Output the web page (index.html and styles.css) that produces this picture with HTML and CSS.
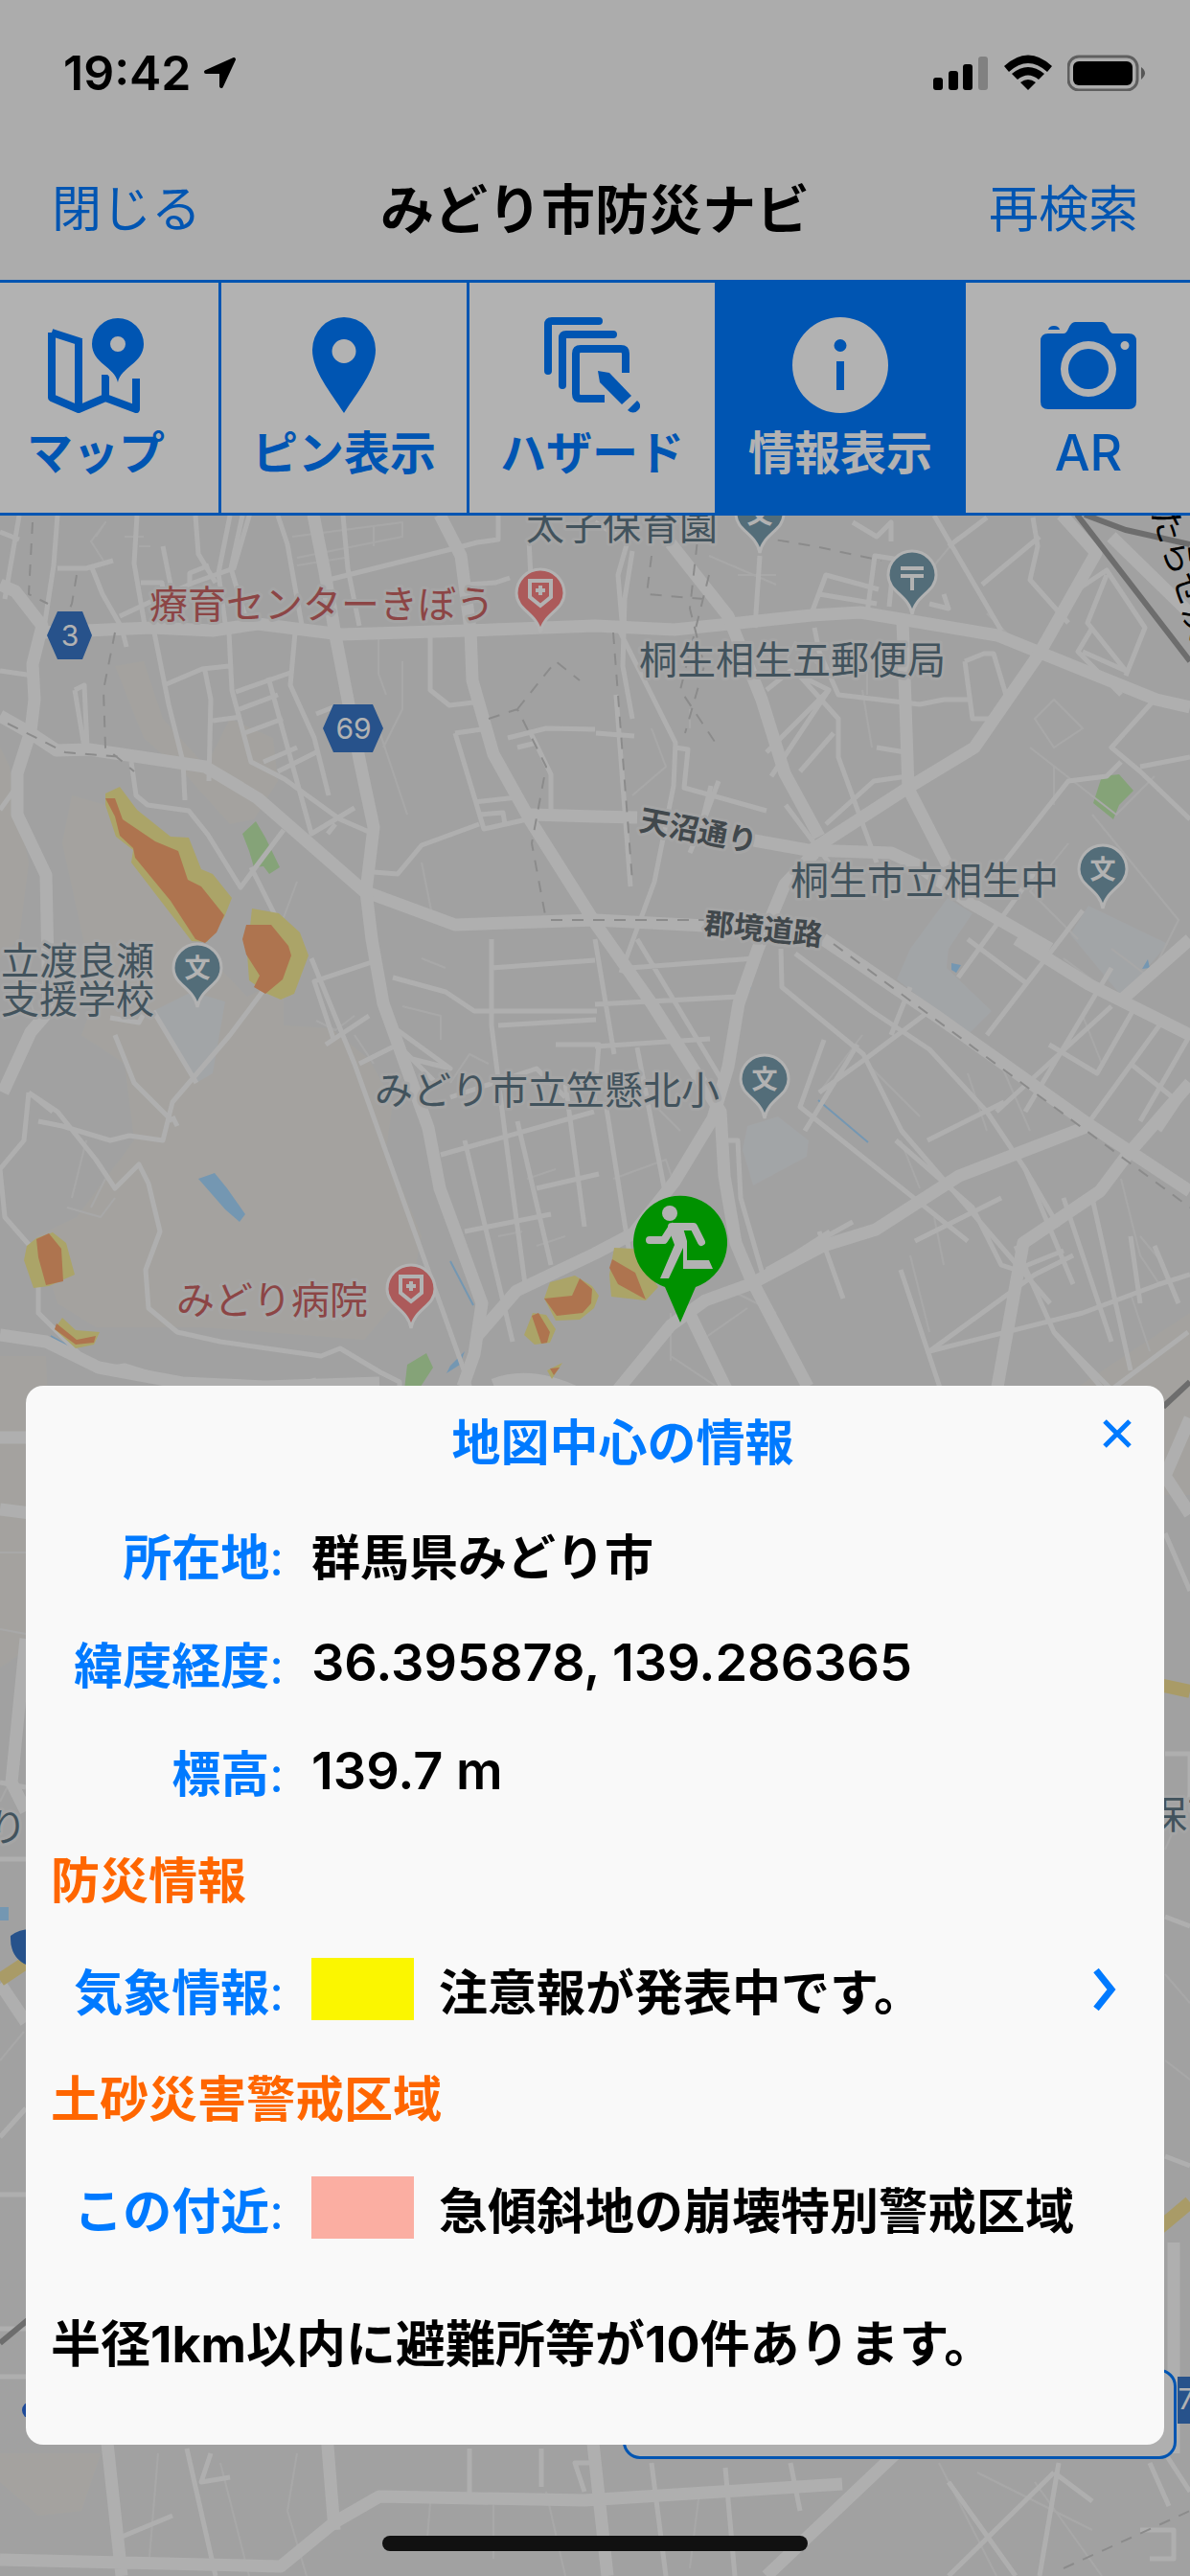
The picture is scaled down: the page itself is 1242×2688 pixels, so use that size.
FILE: index.html
```html
<!DOCTYPE html>
<html lang="ja">
<head>
    <meta charset="UTF-8">
    <meta name="viewport" content="width=device-width, initial-scale=1.0">
    <title>みどり市防災ナビ</title>
    <link rel="stylesheet" href="styles.css">
</head>
<body>
    <div class="app">
        <div class="status-bar">
            <div class="status-left">
                <span class="time">19:42</span>
                <svg class="location" viewBox="0 0 34 32" width="34" height="32"><path d="M32 2 19 30V15H3z" stroke="#000" stroke-width="4" stroke-linejoin="round"/></svg>
            </div>
            <div class="status-right">
                <svg viewBox="0 0 58 38" width="58" height="38">
                    <rect x="0" y="24" width="10" height="13" rx="3"/>
                    <rect x="16" y="17" width="10" height="20" rx="3"/>
                    <rect x="31" y="10" width="10" height="27" rx="3"/>
                    <rect x="47" y="2" width="10" height="35" rx="3" opacity="0.25"/>
                </svg>
                <svg viewBox="0 0 50 38" width="50" height="38">
                    <path d="M25 37 17 29q8-6 16 0zM8 20q17-14 34 0l-6 6q-11-9-22 0zM0 12q25-23 50 0l-5 6Q25 0 5 18z"/>
                </svg>
                <svg viewBox="0 0 82 38" width="82" height="38">
                    <rect x="1" y="2" width="72" height="35" rx="11" fill="none" stroke="#000" stroke-width="3" opacity="0.45"/>
                    <rect x="6" y="7" width="62" height="25" rx="6"/>
                    <path d="M77 13q8 6 0 13z" opacity="0.5"/>
                </svg>
            </div>
        </div>

        <header class="nav-bar">
            <button class="nav-button">閉じる</button>
            <h1>みどり市防災ナビ</h1>
            <button class="nav-button">再検索</button>
        </header>

        <nav class="tabs">
            <button class="tab">
                <svg viewBox="0 0 100 100" width="100" height="100">
                    <path d="M4 16v68l28 12 28-12 32 12V64M4 16l31 10M32 24v70M60 60v24" fill="none" stroke="currentColor" stroke-width="8" stroke-linejoin="round"/>
                    <path d="M73 72C66 52 44 48 44 29a29 29 0 0 1 58 0c0 19-22 23-29 43z" stroke="#fff" stroke-width="5" class="map-pin"/>
                    <path fill="currentColor" fill-rule="evenodd" d="M73 68c-3-16-27-20-27-40a27 27 0 0 1 54 0c0 20-24 24-27 40zM73 20a8 8 0 1 0 0 16 8 8 0 1 0 0-16z"/>
                </svg>
                <span>マップ</span>
            </button>
            <button class="tab">
                <svg viewBox="0 0 100 100" width="100" height="100"><path fill="currentColor" fill-rule="evenodd" d="M50 100C36 78 17 56 17 34a33 34 0 0 1 66 0c0 22-19 44-33 66zM50 23a12 12 0 1 0 0 25 12 12 0 1 0 0-25z"/></svg>
                <span>ピン表示</span>
            </button>
            <button class="tab">
                <svg viewBox="0 0 100 100" width="100" height="100" fill="none" stroke="currentColor" stroke-width="8" stroke-linecap="round">
                    <path d="M4 56V8q0-4 4-4h49M19 71V22q0-4 4-4h49"/>
                    <path d="M85 58V38q0-5-5-5H38q-5 0-5 5v42q0 5 5 5h25" stroke-linecap="butt"/>
                    <path d="M56 56l12 2 23 24-10 9-23-23z" fill="currentColor" stroke="none"/>
                    <path d="M87 97 97 87q6 5 1 10t-11 0z" fill="currentColor" stroke="none"/>
                </svg>
                <span>ハザード</span>
            </button>
            <button class="tab active">
                <svg viewBox="0 0 100 100" width="100" height="100"><path fill="currentColor" fill-rule="evenodd" d="M50 0a50 50 0 1 0 0 100A50 50 0 1 0 50 0zM50 23a6 6 0 1 1 0 13 6 6 0 1 1 0-13zM46 46h8v30h-8z"/></svg>
                <span>情報表示</span>
            </button>
            <button class="tab">
                <svg viewBox="0 0 100 100" width="100" height="100"><path fill="currentColor" fill-rule="evenodd" d="M8 17h16q3 0 5-5 3-7 7-7h28q4 0 7 7 2 5 5 5h16q8 0 8 8v63q0 8-8 8H8q-8 0-8-8V25q0-8 8-8zM50 25a29 29 0 1 0 0 58 29 29 0 1 0 0-58zM50 33a21 21 0 1 1 0 42 21 21 0 1 1 0-42zM88 25a4 4 0 1 0 0 9 4 4 0 1 0 0-9zM8 13q1-4 6-4t6 4z"/></svg>
                <span class="latin">AR</span>
            </button>
        </nav>

        <main class="map">
            <svg class="map-canvas" viewBox="0 538 1242 2150" preserveAspectRatio="xMidYMin slice">
                <defs>
                    <g id="pin"><path d="M0 41C-3 21-25 18-25 0a25 25 0 0 1 50 0C25 18 3 21 0 41z" stroke-width="3"/></g>
                    <path id="cross" d="M-11-13h22v17L0 13-11 4zM-5-3H5M0-8V2" fill="none" stroke="#fff" stroke-width="4"/>
                </defs>

                <!-- hills, grounds, water, parks -->
                <g class="hill">
                    <path d="M75 830 110 840 200 980 258 1040 296 1020 296 1070 345 1073 385 1105 410 1150 403 1200 440 1290 430 1340 380 1398 210 1385 100 1385 60 1360 38 1290 80 1270 140 1190 130 1110 85 1080 100 1040 65 880z"/>
                    <path d="M120 695 150 690 170 750 215 800 240 750 285 770 290 815 265 855 240 860 195 810 150 770z"/>
                    <path d="M0 780 10 800 30 900 20 980 0 1000zM0 1415 48 1415 60 1700 0 1740zM1125 1447 1242 1370V1560H1125zM0 2560H105L85 2620 40 2625 0 2590z"/>
                </g>
                <g class="ground">
                    <path d="M160 1055 200 1035 235 1045 222 1120 205 1130zM989 937 1015 953 990 990 988 1010 1035 1055 1010 1080 936 1022 950 990zM1136 945 1219 985 1171 1040 1117 975z"/>
                    <path d="M780 1175 812 1165 844 1190 842 1207 786 1237 775 1200z"/>
                </g>
                <g class="water">
                    <path d="M207 1230 224 1224 237 1240 256 1267 250 1275 235 1262zM993 1005 1003 1007 998 1015 993 1012zM1198 1001 1200 1010 1192 1011zM782 1025 784 1030 779 1041zM0 1990H9V2004H0zM470 1425 485 1410 480 1424 466 1433z"/>
                    <path class="stream" d="M470 1316 494 1362M854 1148 906 1192M53 1394 74 1406"/>
                </g>
                <g class="park">
                    <path d="M253 870 267 857 277 874 292 905 281 912 275 904 265 905 260 888zM1150 810 1168 808 1183 825 1168 840 1162 855 1141 838zM425 1424 445 1412 452 1427 437 1450H422zM535 1445 556 1442V1450H530z"/>
                </g>

                <!-- small streets -->
                <g class="lane">
                    <path d="M100 560 110 545 95 565 108 585M130 560h20M145 570h12M310 590l50-8M305 560l115-15v15l-110 22M390 550v20M395 663v40l8 22M440 1000l25 10M420 690v50l-20 40M395 760 425 850M440 900 450 950M310 920l-30 80M55 1030l-30-5 10 30"/>
                    <path d="M680 760 695 800 660 830M720 740v20M740 580l70 30M770 600h40M820 690l10-20 30 30M850 700h45M900 720l10 60M905 690v35M1000 560l-25 30M1030 640l40 40 20-10M1080 750l20 30 30-20-30-30zM1075 780l90 70 40-40M1100 800v40M1140 850l90 110-30 60-40-30M1115 880l-40 50 50 50"/>
                    <path d="M420 1050l40 10v25M330 1065l20 10 20-15M370 1080l20 30M470 1130l20-30 20 10M550 1230l30-10M520 1290l25-5M560 1300l30-10M70 1260l35 10 15-20M90 1190l-15 60M110 1230l-15 30M640 1230l55-20 10 30M650 1120l60 60M900 1080 855 1140M905 1110l55 55M940 1190l20 50M975 1270l10 50M1010 1120l20 60M1040 1100l35 80M1110 1000l40 30M1130 1060l20 50M1170 1230l20 80 20 30M1190 1290l25 30M1180 1350l20 60M950 1310l20 80M770 1350l40 20M730 1400l50-35M700 1370v50M700 1415l60 40"/>
                    <path d="M0 1620h27M0 1700l27 5M0 1880l20-40M0 2150l25-30M1216 1930l26-60M1216 2060l26 30M1216 2150l26 20M165 2560l-10 120M230 2570l30 118M310 2560l-10 60 20 68M450 2600l-5 60M515 2610v60M570 2600l20 88M730 2600l-10 80M980 2570l60 118M1080 2590l70 98M1020 2580l120 60"/>
                </g>
                <g class="street">
                    <path d="M60 538 56 590 46 655M20 538 5 625M0 555l20 8M60 593h30l28-8M95 590l12 30 20 35 5 20M143 538l-3 50 12 70M125 643l32-15 45-20 42-15 22-75h35M204 538l3 40 18 30M198 610v-12l20-8M240 538l-12 60 8 60M253 538l-12 55 18 60M290 538l10 30 16 90M170 570l10 50M147 608h22l2 12"/>
                    <path d="M358 538l5 55 12 60M343 605l140-35 15-4 22-3v-30M552 563l2 40M487 610l30-2 15-5M161 660l15 75 15 60 2 40M171 715l40-17 28-3M214 700l6 30-2 85M239 660l3 60 20 75 35 18 58 42 30 13M308 660l-5 55 25 55 15 60M246 722l57-20M250 740l40-15M255 765l40-15M222 752l30-4M280 707l45 163 45-27M275 795l35-15M290 805l40-20M330 745l20-8M350 860l-8 10"/>
                    <path d="M78 720l10-5 3 65M78 720l10 60M449 660v60l20 16 25-3M475 765l35-5M475 765l30 100 45-10M495 837l45-5M500 850l25-2 2 12M530 770l40-10 51 1M553 763l22 45v40M540 780l20-5M390 910l25 2 25-30 60-22M0 700l35 5M137 795l5 35 12 10 43 6 20 25 34 55 45-60M262 905l15 30 30 60M0 845l18-25"/>
                    <path d="M660 575l-8 50-2 70 10 55M650 660l-5-60 10-35-34-20M793 580l-5 75M645 655l30 60 30 60-2 45-20 100-35 95M705 780l13 2-4 40 86 24M720 890l15-35 15-40M742 820l-10 40 18 5M643 725l15 200M622 765l40 3M847 640l15-40 55 15M855 620l60 10M905 640l8-60 20 3-5 50M985 620l5 15-20-5M850 655l5 25 20 45 85 10 25-5h28M800 720l25-20 40 20-60 90M865 720l-65 65M830 700l45 50v40l40 110M870 765l-35 40M820 840l45 60M862 860l50-45 35-5M915 780l30 5"/>
                    <path d="M1007 690l20-8 10 0 15 50M1007 690l8 60h25M890 545l25 15 15-15v20M975 538l70 120M990 570l40-30M1025 610l60-50M1078 540l5 30-8 35 40 45M1125 615l30-20 40 60-20 50M1155 600l-20 50 40 50-45-20M1140 655l-15 25 45 45M1205 730l-45 50 30 25 52 50M1190 800l52-10M1170 795l-15 15-40 5-75 95"/>
                    <path d="M410 1020l55 15 30 20h128M388 1004l-60 20 20 60M340 1090l45-30M325 1000l45 110 125 350M375 1110l40-20 40 40M415 1075l55 40-40-10M470 1145l90-30 30 30M513 980v90l15 120 20 150M513 1010l108-8M520 1070l102-6M460 1205l160-45M485 1190l50 210M540 1170l35 150M485 1285l90-18M560 1240l65-15M580 1090h45l-5 60M590 1130l20 150"/>
                    <path d="M657 1010l130-10M621 1048l150-8M621 1092l120-8M665 980l90 150M621 980l20 120M665 1093l50 260M632 1150l30 190M815 990l1 40 85 70 40 80 155 180M830 995l80 60 60 40 60 65 40 60 35 60M860 1085l-25 70 175 140M855 1140l55-40 60-45M840 1180l55-90M950 1030l-20 50M968 1190l80-40M935 1190l80 70 30 60 15 5 50-20M955 1295l50-25 40-20M855 1285l25 70M800 1325l90-50M752 1190h18l3 60 23 80 70-45M940 1325l50 150M970 1410l110-80 40-20"/>
                    <path d="M1000 1020l80-110M1010 980l60 45M1030 1080l100-130M1040 1160l120-110M1070 1160l90-150M1095 1090l50 30 40-70M1130 1180l80-110M1180 1110l50 40-20 30M1190 1170l52-90M1060 1300l40 90 60 70M1070 1220l50 120M1110 1250l50 150M1140 1250l40 180M970 1410l160-40 80-30 32-10M1100 1390l60 60 80-60M1180 1290l10 70M1205 1300l25 60"/>
                    <path d="M30 1140l30 20 40 50 20 30 25-25 10 20 12 50-15 40 3 40 30 25 45 10 105 15 20-8 42 25 20 10v40M40 1170l25 5 50 15 20-5 35 5 10-40 60-70 60-80M160 1055l45 75M55 1160l-25-20M30 1140l-5 50-25 30 5 50 35 40v60l60 60 30-5 80 25 40 5 60-10 20-5M120 1080l20 50 40 40M180 1165l5 10M115 1062l30 5 8-15"/>
                    <path d="M0 2430h27M0 2290h27M0 1860l27 5M0 1940h27M0 2230l27-30M0 2480h27M1216 1600l26 60M1216 1830h26v50M1216 2000l26 10M1216 2250l26 10M1216 2560l26 40M195 2555l30 133M120 2650l60-25M220 2560l-10 30 30-5M620 2570h-20l10 30M490 2555v55M565 2555v40M680 2570l15 118M757 2575l10 113M825 2570l10 50M990 2590l70 98M1105 2570l-20 118M1100 2580l-110 108M1100 2580l40 30M1190 2640h35v30h-25M1200 2570l20 45"/>
                </g>

                <!-- through roads -->
                <g class="road">
                    <path d="M0 610 16 617 44 653 34 693 36 730 32 763 18 807 18 850 48 913 51 1055 32 1077 3 1140"/>
                    <path d="M0 747 32 765 59 783 93 782 147 790 214 800 269 833 380 930 475 965 621 960 736 966"/>
                    <path d="M44 660 158 655 222 658 269 651 356 662 487 658 621 653 704 657 847 642 898 639 1041 663 1207 730 1242 738"/>
                    <path d="M327 537 339 597 350 663 376 797 390 863 382 930 388 980 400 1047 447 1177 459 1240 503 1360 495 1413 483 1447"/>
                    <path d="M459 537 481 580 491 657 493 710 515 787 554 857 621 963 680 1047 752 1160 756 1227 768 1297 783 1333 843 1447"/>
                    <path d="M554 850 621 852 665 853M787 877 843 887 930 890 958 903 1009 940 1096 990M1061 980 1136 1027 1242 1080"/>
                    <path d="M700 567 760 643 795 730 819 807 855 873M847 887 946 823 1017 780 1084 683 1144 577 1108 537M942 647 948 823 989 903"/>
                    <path d="M850 890 819 923 791 990 771 1047 760 1113 744 1167 704 1233 661 1287 621 1308 539 1347 499 1393"/>
                    <path d="M859 980 977 1060 1136 1173 1242 1243M645 1450 700 1383 736 1357 783 1340 859 1300 914 1283 1001 1227 1136 1175"/>
                    <path d="M1242 1130 1175 1207 1148 1243 1068 1297 1041 1447M1242 980 1171 1043M716 1363 768 1470M1160 560 1242 640"/>
                    <path d="M0 1393 48 1400 103 1427 190 1443 277 1447 396 1443M515 1445q40-15 90 10M0 1500H40M0 1575l40 5M27 1710 12 1860 27 1890M0 2070 27 2110M1242 1480 1216 1540 1242 1580"/>
                    <path d="M0 2671 293 2678 349 2632 396 2605 610 2609 879 2592M341 2540 349 2640M618 2540 634 2688M935 2560 800 2688M111 2540 127 2688M1225 2340v220"/>
                </g>
                <path class="highway" d="M0 2066 27 2048M1210 1758 1242 1765M1210 2325 1242 2298"/>
                <path class="rail" d="M1124 537 1242 690M1132 537 1175 553 1242 568M0 2445 30 2420M1214 1468 1242 1442"/>
                <path class="border-line" d="M34 545 30 620 50 630M80 600l-5 30-20 45M120 660l-12 60 2 60 30 25M8 755l60 30 60 5M510 750l30-10 30 60-15 80 15 80M540 740l40-50 25 20M575 960h160M640 660l20 260M730 545l-10 90 15 60-20 70M740 600l-30 120 40 60M790 560l60 10 70 15M680 580l-5 40 60 5M870 985 1242 1260M1110 2680l132-60"/>

                <!-- landslide warning areas -->
                <g class="warning">
                    <path d="M110 828 125 821 143 845 178 873 197 874 210 907 222 912 242 937 234 957 216 983 200 982 137 900 139 887 121 873 110 840zM263 948 291 953 313 973 322 997 307 1037 293 1043 279 1037 260 1023 258 995z"/>
                    <path d="M38 1292 55 1286 69 1297 78 1330 51 1342 35 1344 25 1315 28 1300zM65 1375 79 1388 104 1390 98 1403 79 1407 57 1387zM574 1338 600 1331 618 1342 625 1352 620 1365 605 1377 580 1378 568 1355z"/>
                    <path d="M556 1370 570 1372 580 1387 574 1401 558 1403 547 1393zM571 1430 587 1422 576 1439zM641 1302 661 1303 687 1343 674 1357 638 1353 636 1330z"/>
                </g>
                <g class="special">
                    <path d="M110 833 120 833 128 855 162 878 186 888 196 918 210 925 234 955 226 973 214 984 204 980 178 940 141 895 139 885 125 872 120 852zM257 965 283 965 301 987 304 997 295 1022 277 1037 265 1030 271 1018 257 996 253 980z"/>
                    <path d="M38 1293 51 1287 64 1303 66 1337 48 1341 40 1312zM59 1381 80 1398 100 1394 98 1401 79 1403 57 1387zM568 1355 597 1352 605 1334 618 1345 617 1360 608 1370 581 1373z"/>
                    <path d="M555 1373 562 1370 574 1390 571 1401 565 1402zM574 1428 584 1427 578 1435zM639 1314 663 1328 674 1356 645 1340 636 1323z"/>
                </g>

                <!-- route shields -->
                <g class="shield">
                    <path d="M49 663 60 638H86L96 663 86 688H60zM337 760 348 735H389L400 760 389 785H348zM1229 2480H1242V2529H1229zM11 2020Q20 2013 32 2013V2052Q10 2045 11 2020z"/>
                    <text x="73" y="674">3</text>
                    <text x="369" y="771">69</text>
                    <text x="1247" y="2514">78</text>
                </g>
                <circle cx="32" cy="2515" r="9" fill="#2b6bdc"/>

                <!-- places -->
                <g class="place">
                    <text x="549" y="563">太子保育園</text>
                    <text x="667" y="703">桐生相生五郵便局</text>
                    <text x="825" y="933">桐生市立相生中</text>
                    <text x="1" y="1017">立渡良瀬</text>
                    <text x="1" y="1057">支援学校</text>
                    <text x="391" y="1152">みどり市立笠懸北小</text>
                    <text x="-12" y="1921">り</text>
                    <text x="1199" y="1908">保育</text>
                </g>
                <g class="place medical">
                    <text x="156" y="645">療育センターきぼう</text>
                    <text x="184" y="1371">みどり病院</text>
                </g>
                <g class="road-name">
                    <text transform="translate(666 866) rotate(11)">天沼通り</text>
                    <text transform="translate(734 974) rotate(6)">郡境道路</text>
                </g>
                <text class="rail-name" transform="translate(1190 500) rotate(72)">わたらせ渓谷線</text>

                <g class="marker">
                    <use href="#pin" x="793" y="536"/><text x="793" y="546">文</text>
                    <use href="#pin" x="952" y="600"/><path d="M940 593h24M940 601h24M952 601v15" stroke-width="4"/>
                    <use href="#pin" x="1151" y="907"/><text x="1151" y="917">文</text>
                    <use href="#pin" x="206" y="1010"/><text x="206" y="1020">文</text>
                    <use href="#pin" x="798" y="1126"/><text x="798" y="1136">文</text>
                </g>
                <g class="marker red">
                    <use href="#pin" x="564" y="619"/><use href="#cross" x="564" y="619"/>
                    <use href="#pin" x="429" y="1345"/><use href="#cross" x="429" y="1345"/>
                </g>

                <!-- evacuation shelter -->
                <g transform="translate(710 1297)">
                    <path d="M0 83-16 46a49 49 0 1 1 32 0z" fill="#00d000"/>
                    <circle cx="-11" cy="-31" r="8" fill="#fff"/>
                    <path d="M-9-17H14L22-1M-8-17-17-3H-32" fill="none" stroke="#fff" stroke-width="8" stroke-linecap="round" stroke-linejoin="round"/>
                    <path d="M-12-14 2-19 7-2V18H30L34 27H3V5L-12 37H-21L-6 2z" fill="#fff"/>
                </g>
            </svg>
            <button class="map-button" aria-label="地図の表示設定"></button>
        </main>
    </div>

    <div class="overlay">
        <section class="sheet" role="dialog" aria-labelledby="sheet-title">
            <div class="sheet-header">
                <h2 id="sheet-title">地図中心の情報</h2>
                <button class="close" aria-label="閉じる">
                    <svg viewBox="0 0 30 30" width="30" height="30"><path d="M2 2 28 28M28 2 2 28"/></svg>
                </button>
            </div>
            <dl class="row"><dt>所在地<span>:</span></dt><dd>群馬県みどり市</dd></dl>
            <dl class="row"><dt>緯度経度<span>:</span></dt><dd class="number">36.395878, 139.286365</dd></dl>
            <dl class="row"><dt>標高<span>:</span></dt><dd class="number">139.7 m</dd></dl>
            <h3>防災情報</h3>
            <dl class="row">
                <dt>気象情報<span>:</span></dt>
                <dd><span class="swatch advisory"></span>注意報が発表中です。</dd>
                <dd class="more">
                    <button aria-label="気象情報の詳細">
                        <svg viewBox="0 0 24 44" width="24" height="44"><path d="M3 2 19 22 3 42"/></svg>
                    </button>
                </dd>
            </dl>
            <h3>土砂災害警戒区域</h3>
            <dl class="row">
                <dt>この付近<span>:</span></dt>
                <dd><span class="swatch danger"></span>急傾斜地の崩壊特別警戒区域</dd>
            </dl>
            <p class="summary">半径1km以内に避難所等が10件あります。</p>
        </section>
        <div class="home-indicator"></div>
    </div>
</body>
</html>
```
FILE: styles.css
```css
/* General Styles */
* {
    box-sizing: border-box;
}

body {
    margin: 0;
    font-family: Inter, 'Noto Sans CJK JP', sans-serif;
    font-size: 51px;
    color: black;
    background-color: #f7f7f7;
}

h1, h2, h3, p, dl, dd {
    margin: 0;
}

button {
    padding: 0;
    border: 0;
    background: none;
    font: inherit;
    color: #007aff;
    cursor: pointer;
}

svg {
    display: block;
}

.app {
    display: flex;
    flex-direction: column;
    height: 100vh;
    overflow: hidden;
}

/* Status bar */
.status-bar {
    display: flex;
    justify-content: space-between;
    align-items: center;
    flex: none;
    height: 148px;
    padding: 4px 46px 0 66px;
}

.status-left, .status-right {
    display: flex;
    align-items: center;
    gap: 16px;
}

.status-left {
    gap: 12px;
}

.time {
    font-size: 50px;
    font-weight: 600;
}

/* Navigation bar */
.nav-bar {
    display: flex;
    justify-content: space-between;
    align-items: center;
    flex: none;
    height: 144px;
    padding: 0 54px 2px;
}

.nav-bar h1 {
    font-size: 56px;
    font-weight: bold;
    line-height: 80px;
}

.nav-button {
    font-size: 52px;
    line-height: 80px;
}

/* Tabs */
.tabs {
    display: flex;
    flex: none;
    height: 246px;
    margin-left: -28px;
    border-top: 3px solid #007aff;
    border-bottom: 3px solid #007aff;
    background-color: white;
    overflow: hidden;
}

.tab {
    display: flex;
    flex-direction: column;
    align-items: center;
    gap: 8px;
    flex: none;
    width: 259px;
    padding-top: 36px;
    border-right: 3px solid #007aff;
    font-size: 48px;
    font-weight: bold;
    line-height: 68px;
}

.tab .latin {
    font-size: 52px;
    font-weight: 500;
}

.tab.active {
    background-color: #007aff;
    color: white;
}

.tab .map-pin {
    fill: white;
}

/* Map */
.map {
    position: relative;
    flex: 1;
    min-height: 0;
    background-color: #e7e7e7;
}

.map-canvas {
    width: 100%;
    height: 100%;
}

.hill {
    fill: #ebe9e4;
}

.ground {
    fill: #e9ecef;
}

.water {
    fill: #a7d8ff;
}

.stream {
    fill: none;
    stroke: #a7d8ff;
    stroke-width: 2;
}

.park {
    fill: #bfeaad;
}

.lane, .street, .road {
    fill: none;
    stroke: #fbfbfb;
    stroke-linejoin: round;
}

.lane {
    stroke: #f1f1f1;
    stroke-width: 2;
}

.street {
    stroke-width: 5;
}

.road {
    stroke-width: 13;
}

.highway {
    fill: none;
    stroke: #f2df94;
    stroke-width: 14;
}

.rail {
    fill: none;
    stroke: #9d9d9d;
    stroke-width: 6;
}

.border-line {
    fill: none;
    stroke: #c8c8c8;
    stroke-width: 2;
    stroke-dasharray: 12 10;
}

.warning {
    fill: #f5eb95;
}

.special {
    fill: #f9a772;
}

.shield {
    fill: #3876c7;
}

.shield text {
    fill: white;
    font-size: 30px;
    text-anchor: middle;
}

.place, .road-name {
    fill: #5f7886;
    stroke: #ededed;
    stroke-width: 6;
    stroke-linejoin: round;
    paint-order: stroke;
    font-size: 40px;
}

.place.medical {
    fill: #c96464;
}

.road-name {
    fill: #5e686e;
    font-size: 31px;
    font-weight: bold;
}

.rail-name {
    font-size: 36px;
}

.marker {
    fill: #789dae;
    stroke: white;
}

.marker.red {
    fill: #f78181;
}

.marker text {
    fill: white;
    stroke: none;
    font-size: 27px;
    font-weight: bold;
    text-anchor: middle;
}

.map-button {
    position: absolute;
    right: 14px;
    bottom: 122px;
    width: 578px;
    height: 94px;
    border: 3px solid #007aff;
    border-radius: 18px;
    background-color: #fbfbfb;
}

/* Information sheet */
.overlay {
    position: fixed;
    inset: 0;
    display: flex;
    flex-direction: column;
    justify-content: flex-end;
    align-items: center;
    padding: 0 27px 26px;
    background-color: rgba(0, 0, 0, 0.3);
}

.sheet {
    width: 100%;
    margin-bottom: 95px;
    padding: 0 26px 17px;
    border-radius: 18px;
    background-color: #f9f9f9;
    font-weight: bold;
}

.sheet-header {
    display: grid;
    grid-template-columns: 96px 1fr 30px;
    padding-right: 8px;
    height: 119px;
}

.sheet-header h2 {
    grid-column: 2;
    font-size: 51px;
    line-height: 119px;
    text-align: center;
    color: #007aff;
}

.close {
    align-self: start;
    margin-top: 35px;
}

.close path, .more path {
    fill: none;
    stroke: #007aff;
    stroke-width: 5;
}

.more path {
    stroke-width: 7;
}

.row {
    display: flex;
    align-items: center;
    gap: 29px;
    height: 113px;
    padding-right: 24px;
}

.row dt {
    flex: none;
    width: 243px;
    text-align: right;
    color: #007aff;
}

.row dt span {
    font-weight: normal;
}

.row dd {
    display: flex;
    align-items: center;
    gap: 26px;
    white-space: nowrap;
}

.row .number {
    font-size: 54px;
    font-weight: 600;
}

.row .more {
    margin-left: auto;
}

.swatch {
    width: 107px;
    height: 65px;
}

.swatch.advisory {
    background-color: #fbf600;
}

.swatch.danger {
    background-color: #fbaea2;
}

.sheet h3 {
    padding-top: 3px;
    font-size: 51px;
    line-height: 112px;
    color: #ff6600;
}

.summary {
    font-size: 52px;
    line-height: 174px;
}

.home-indicator {
    width: 444px;
    height: 16px;
    border-radius: 8px;
    background-color: #111;
}
```
